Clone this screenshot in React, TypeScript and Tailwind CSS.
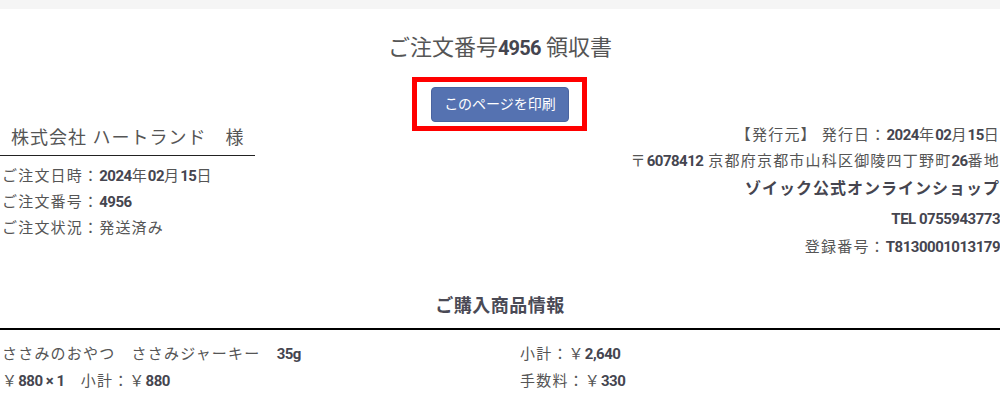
import React from 'react'

const font = { fontFamily: '"Roboto", "Noto Sans CJK JP", sans-serif' }

// condensed-looking bold numerals
function B({ children }: { children: React.ReactNode }) {
  return <b className="text-[15px] font-bold tracking-[-0.5px] text-[#45454f]">{children}</b>
}

export default function App() {
  return (
    <div className="w-[1000px] h-[400px] overflow-hidden bg-white text-[#555]" style={font}>
      <div className="h-[9px] bg-[#f5f5f5]" />

      {/* Title */}
      <h1 className="mt-[24px] text-center text-[22px] leading-[30px]">
        ご注文番号<b className="text-[20px] font-bold tracking-[-0.8px] text-[#45454f]">4956</b> 領収書
      </h1>

      {/* Print button */}
      <div className="mt-[24px] flex justify-center">
        <div className="relative">
          <button className="h-[35px] w-[138px] rounded-[4px] border border-[#4a64a0] bg-[#5572b1] text-[14px] text-white">
            このページを印刷
          </button>
          <div className="absolute -left-[19px] -right-[18px] -top-[10px] -bottom-[9px] border-[5px] border-[#ff0000]" />
        </div>
      </div>

      {/* Customer / issuer */}
      <div className="flex justify-between tracking-[1.2px]">
        <div className="w-[255px]">
          <div className="border-b border-[#222] pl-[11px] pt-[3px] pb-[4px] text-[18px] leading-[26px] tracking-[1px]">
            株式会社 ハートランド　様
          </div>
          <div className="mt-[7px] pl-[2px] text-[15px] leading-[26px]">
            <div>ご注文日時：<B>2024</B>年<B>02</B>月<B>15</B>日</div>
            <div>ご注文番号：<B>4956</B></div>
            <div>ご注文状況：発送済み</div>
          </div>
        </div>
        <div className="text-right text-[15px]">
          <div className="leading-[26px]">【発行元】 発行日：<B>2024</B>年<B>02</B>月<B>15</B>日</div>
          <div className="leading-[26px]">〒<B>6078412</B> 京都府京都市山科区御陵四丁野町<B>26</B>番地</div>
          <div className="text-[16px] font-bold leading-[30px] tracking-[1px] text-[#45454f]">ゾイック公式オンラインショップ</div>
          <div className="leading-[30px]"><B>TEL 0755943773</B></div>
          <div className="leading-[26px]">登録番号：<B>T8130001013179</B></div>
        </div>
      </div>

      {/* Items */}
      <h2 className="mt-[33px] border-b-2 border-black pb-[9px] text-center text-[18px] font-bold leading-[26px] tracking-[0.5px] text-[#4a4a55]">
        ご購入商品情報
      </h2>
      <div className="mt-[11px] grid grid-cols-2 text-[15px] leading-[27px] tracking-[1.2px]">
        <div className="pl-[2px]">
          <div>ささみのおやつ　ささみジャーキー　<B>35g</B></div>
          <div>￥<B>880 × 1</B>　小計：￥<B>880</B></div>
        </div>
        <div className="pl-[20px]">
          <div>小計：￥<B>2,640</B></div>
          <div>手数料：￥<B>330</B></div>
        </div>
      </div>
    </div>
  )
}
